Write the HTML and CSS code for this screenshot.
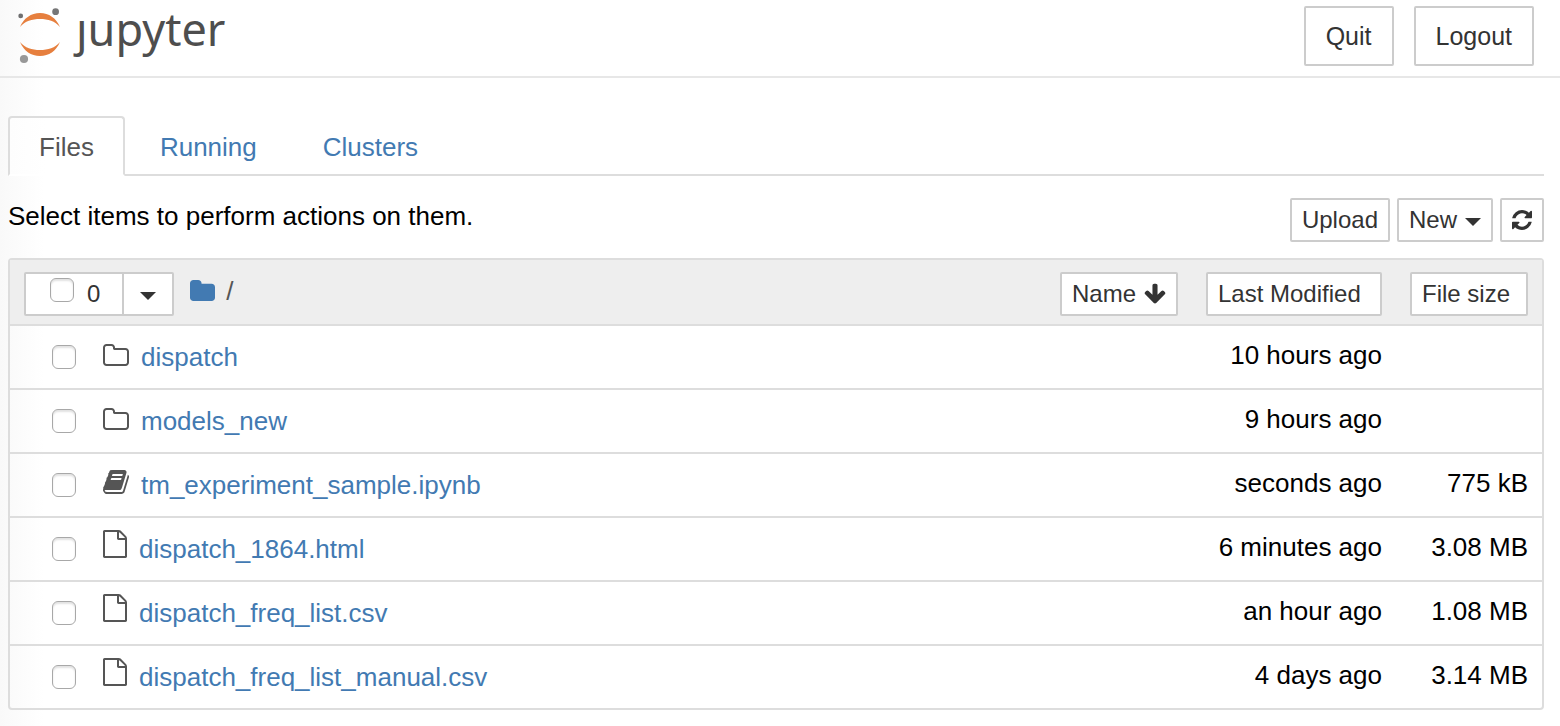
FILE: index.html
```html
<!DOCTYPE html>
<html lang="en">
<head>
<meta charset="utf-8">
<title>Home</title>
<link rel="stylesheet" href="styles.css">
</head>
<body>
<svg class="sprite" aria-hidden="true">
  <symbol id="i-refresh" viewBox="128 0 1536 1792"><path d="M1639 1056q0 5-1 7-64 268-268 434.500t-478 166.500q-146 0-282.500-55t-243.500-157l-129 129q-19 19-45 19t-45-19-19-45v-448q0-26 19-45t45-19h448q26 0 45 19t19 45-19 45l-137 137q71 66 161 102t187 36q134 0 250-65t186-179q11-17 53-117 8-23 30-23h192q13 0 22.500 9.500t9.500 22.500zm25-800v448q0 26-19 45t-45 19h-448q-26 0-45-19t-19-45 19-45l138-138q-148-137-349-137-134 0-250 65t-186 179q-11 17-53 117-8 23-30 23h-199q-13 0-22.500-9.500t-9.500-22.500v-7q65-268 270-434.500t480-166.500q146 0 284 55.500t245 156.500l130-129q19-19 45-19t45 19 19 45z"/></symbol>
  <symbol id="i-down" viewBox="64 0 1664 1792"><path d="M1675 832q0 53-37 90l-651 652q-39 37-91 37-53 0-90-37l-651-652q-38-36-38-90 0-53 38-91l74-75q39-37 91-37 53 0 90 37l294 294v-704q0-52 38-90t90-38h128q52 0 90 38t38 90v704l294-294q37-37 90-37 52 0 91 37l75 75q37 39 37 91z"/></symbol>
  <symbol id="i-folder" viewBox="64 0 1664 1792"><path d="M1728 608v704q0 92-66 158t-158 66h-1216q-92 0-158-66t-66-158v-960q0-92 66-158t158-66h320q92 0 158 66t66 158v32h672q92 0 158 66t66 158z"/></symbol>
  <symbol id="i-folder-o" viewBox="64 0 1664 1792"><path d="M1600 1312v-704q0-40-28-68t-68-28h-704q-40 0-68-28t-28-68v-64q0-40-28-68t-68-28h-320q-40 0-68 28t-28 68v960q0 40 28 68t68 28h1216q40 0 68-28t28-68zm128-704v704q0 92-66 158t-158 66h-1216q-92 0-158-66t-66-158v-960q0-92 66-158t158-66h320q92 0 158 66t66 158v32h672q92 0 158 66t66 158z"/></symbol>
  <symbol id="i-book" viewBox="64 0 1664 1792"><path d="M1703 478q40 57 18 129l-275 906q-19 64-76.500 107.500t-122.500 43.500h-923q-77 0-148.500-53.500t-99.500-131.500q-24-67-2-127 0-4 3-27t4-37q1-8-3-21.500t-3-19.500q2-11 8-21t16.500-23.500 16.500-23.500q23-38 45-91.500t30-91.500q3-10 .5-30t-.5-28q3-11 17-28t17-23q21-36 42-92t25-90q1-9-2.500-32t.5-28q4-13 22-30.500t22-22.500q19-26 42.500-84.500t27.500-96.500q1-8-3-25.500t-2-26.500q2-8 9-18t18-23 17-21q8-12 16.500-30.500t15-35 16-36 19.500-32 26.500-23.500 36-11.500 47.500 5.500l-1 3q38-9 51-9h761q74 0 114 56t18 130l-274 906q-36 119-71.500 153.500t-128.500 34.500h-869q-27 0-38 15-11 16-1 43 24 70 144 70h923q29 0 56-15.500t35-41.500l300-987q7-22 5-57 38 15 59 43zm-1064 2q-4 13 2 22.500t20 9.500h608q13 0 25.500-9.500t16.500-22.500l21-64q4-13-2-22.500t-20-9.500h-608q-13 0-25.500 9.500t-16.500 22.500zm-83 256q-4 13 2 22.500t20 9.500h608q13 0 25.500-9.500t16.500-22.500l21-64q4-13-2-22.500t-20-9.500h-608q-13 0-25.500 9.500t-16.500 22.500z"/></symbol>
  <symbol id="i-file" viewBox="128 0 1536 1792"><path d="M1596 380q28 28 48 76t20 88v1152q0 40-28 68t-68 28h-1344q-40 0-68-28t-28-68v-1600q0-40 28-68t68-28h896q40 0 88 20t76 48zm-444-244v376h376q-10-29-22-41l-313-313q-12-12-41-22zm384 1528v-1024h-416q-40 0-68-28t-28-68v-416h-768v1536h1280z"/></symbol>
</svg>

<header class="topbar">
  <a class="brand" href="#" aria-label="jupyter">
    <svg class="brand-mark" viewBox="18 6 46 60" aria-hidden="true">
      <path fill="#e67f3e" d="M20 27C24 18 31 13 40 13S56 18 60 27C55 21 48 19 40 19S25 21 20 27z"/>
      <path fill="#e67f3e" d="M20 42C24 51 31 56 40 56S56 51 60 42C55 48 48 50 40 50S25 48 20 42z"/>
      <circle fill="#6f6f70" cx="20.700" cy="15.900" r="2.400"/>
      <circle fill="#767677" cx="55.600" cy="11.700" r="3.400"/>
      <circle fill="#989898" cx="24" cy="59" r="4.100"/>
    </svg>
    <span class="brand-name">&#567;upyter</span>
  </a>
  <div class="session">
    <button class="btn btn-large" type="button">Quit</button>
    <button class="btn btn-large" type="button">Logout</button>
  </div>
</header>

<main class="page">
  <nav class="tabs">
    <a class="tab tab-active" href="#files" aria-current="page">Files</a>
    <a class="tab" href="#running">Running</a>
    <a class="tab" href="#clusters">Clusters</a>
  </nav>

  <div class="toolbar">
    <p class="hint">Select items to perform actions on them.</p>
    <div class="actions">
      <button class="btn" type="button">Upload</button>
      <button class="btn" type="button">New <span class="caret"></span></button>
      <button class="btn" type="button" aria-label="Refresh"><svg class="icon icon-refresh"><use href="#i-refresh"/></svg></button>
    </div>
  </div>

  <table class="files" id="files">
    <thead>
      <tr>
        <th class="col-name">
          <div class="head">
            <div class="select-group">
              <label class="select-all"><input class="check" type="checkbox"><span>0</span></label>
              <button class="select-menu" type="button" aria-label="Select by type"><span class="caret"></span></button>
            </div>
            <div class="crumbs">
              <a class="crumb" href="#" aria-label="Home folder"><svg class="icon icon-home"><use href="#i-folder"/></svg></a>
              <span>/</span>
            </div>
            <button class="btn sort" type="button">Name <svg class="icon icon-sort"><use href="#i-down"/></svg></button>
          </div>
        </th>
        <th class="col-date"><button class="btn sort sort-fill" type="button">Last Modified</button></th>
        <th class="col-size"><button class="btn sort sort-fill" type="button">File size</button></th>
      </tr>
    </thead>
    <tbody>
      <tr>
        <td class="col-name"><div class="item"><input class="check" type="checkbox" aria-label="dispatch"><svg class="icon icon-wide"><use href="#i-folder-o"/></svg><a href="#">dispatch</a></div></td>
        <td class="col-date">10 hours ago</td><td class="col-size"></td>
      </tr>
      <tr>
        <td class="col-name"><div class="item"><input class="check" type="checkbox" aria-label="models_new"><svg class="icon icon-wide"><use href="#i-folder-o"/></svg><a href="#">models_new</a></div></td>
        <td class="col-date">9 hours ago</td><td class="col-size"></td>
      </tr>
      <tr>
        <td class="col-name"><div class="item"><input class="check" type="checkbox" aria-label="tm_experiment_sample.ipynb"><svg class="icon icon-wide icon-book"><use href="#i-book"/></svg><a href="#">tm_experiment_sample.ipynb</a></div></td>
        <td class="col-date">seconds ago</td><td class="col-size">775 kB</td>
      </tr>
      <tr>
        <td class="col-name"><div class="item"><input class="check" type="checkbox" aria-label="dispatch_1864.html"><svg class="icon icon-file"><use href="#i-file"/></svg><a href="#">dispatch_1864.html</a></div></td>
        <td class="col-date">6 minutes ago</td><td class="col-size">3.08 MB</td>
      </tr>
      <tr>
        <td class="col-name"><div class="item"><input class="check" type="checkbox" aria-label="dispatch_freq_list.csv"><svg class="icon icon-file"><use href="#i-file"/></svg><a href="#">dispatch_freq_list.csv</a></div></td>
        <td class="col-date">an hour ago</td><td class="col-size">1.08 MB</td>
      </tr>
      <tr>
        <td class="col-name"><div class="item"><input class="check" type="checkbox" aria-label="dispatch_freq_list_manual.csv"><svg class="icon icon-file"><use href="#i-file"/></svg><a href="#">dispatch_freq_list_manual.csv</a></div></td>
        <td class="col-date">4 days ago</td><td class="col-size">3.14 MB</td>
      </tr>
    </tbody>
  </table>
</main>
</body>
</html>
```

FILE: styles.css
```css
* {
  box-sizing: border-box;
}

body {
  margin: 0;
  background: #fff linear-gradient(to right, #f9f9f9, #fff 44px);
  color: #000;
  font-family: "Liberation Sans", Arial, sans-serif;
  font-size: 26px;
  line-height: 36px;
}

a {
  color: #427ab2;
  text-decoration: none;
}

.sprite {
  position: absolute;
  width: 0;
  height: 0;
}

.icon {
  display: block;
  flex: none;
  fill: currentColor;
}

.topbar {
  display: flex;
  justify-content: space-between;
  align-items: flex-start;
  padding: 6px 26px 10px 18px;
  border-bottom: 2px solid #e7e7e7;
}

.brand {
  display: flex;
  gap: 12px;
  height: 60px;
  color: #4e4e4e;
}

.brand-mark {
  width: 46px;
  height: 60px;
}

.brand-name {
  font-family: "Noto Sans", "Open Sans", sans-serif;
  font-size: 45px;
  line-height: 46px;
}

.session {
  display: flex;
  gap: 20px;
}

.btn {
  display: flex;
  align-items: center;
  justify-content: center;
  gap: 8px;
  height: 44px;
  padding: 0 10px;
  border: 2px solid #ccc;
  border-radius: 2px;
  background: #fff;
  color: #333;
  font: inherit;
  font-size: 24px;
  white-space: nowrap;
}

.btn-large {
  height: 60px;
  padding: 0 20px;
  font-size: 25px;
}

.caret {
  margin-top: 4px;
  border: 8px solid transparent;
  border-top-color: #333;
  border-bottom: 0;
}

.page {
  padding: 38px 16px 16px 8px;
}

.tabs {
  display: flex;
  gap: 4px;
  border-bottom: 2px solid #ddd;
}

.tab {
  margin-bottom: -2px;
  padding: 11px 29px 9px;
  border: 2px solid transparent;
  border-bottom-color: #ddd;
  border-radius: 4px 4px 0 0;
}

.tab-active {
  border-color: #ddd;
  border-bottom-color: #fff;
  background: linear-gradient(to right, #fdfdfd, #fff 36px);
  color: #555;
}

.toolbar {
  display: flex;
  justify-content: space-between;
  align-items: flex-start;
  padding: 22px 0 16px;
}

.hint {
  margin: 0;
}

.actions {
  display: flex;
  gap: 7px;
}

.icon-refresh {
  width: 20px;
  height: 24px;
}

.files {
  width: 100%;
  border: 2px solid #ddd;
  border-radius: 4px;
  border-spacing: 0;
}

.files th {
  padding: 12px 0 8px;
  background: #eee;
  font-weight: normal;
}

.files td {
  height: 64px;
  padding: 0 0 4px;
  border-top: 2px solid #ddd;
}

.files .col-date {
  width: 204px;
  padding-left: 28px;
  text-align: right;
}

.files .col-size {
  width: 160px;
  padding-left: 28px;
  padding-right: 14px;
  text-align: right;
}

.files td.col-name {
  padding: 0 0 0 42px;
}

.head {
  display: flex;
  align-items: center;
  padding-left: 14px;
}

.select-group {
  display: flex;
  height: 44px;
  border: 2px solid #ccc;
  border-radius: 2px;
  background: #fff;
}

.select-all {
  display: flex;
  align-items: center;
  gap: 13px;
  padding: 0 22px 0 24px;
  color: #333;
  font-size: 24px;
}

.select-all .check {
  margin-bottom: 8px;
}

.select-menu {
  display: flex;
  align-items: center;
  padding: 0 16px;
  border: 0;
  border-left: 2px solid #ccc;
  background: #fff;
}

.check {
  appearance: none;
  flex: none;
  width: 24px;
  height: 24px;
  margin: 0;
  border: 1px solid #a8a8a8;
  border-radius: 6px;
  background: #fff;
  box-shadow: inset 0 2px 2px #e2e2e2;
}

.crumbs {
  display: flex;
  align-items: center;
  gap: 11px;
  padding: 0 16px 6px;
  color: #555;
}

.icon-home {
  width: 25px;
  height: 27px;
}

.sort {
  margin-left: auto;
}

.sort-fill {
  width: 100%;
  justify-content: flex-start;
}

.icon-sort {
  width: 22px;
  height: 24px;
}

.item {
  display: flex;
  align-items: center;
  color: #555;
}

.item .check {
  margin-right: 27px;
}

.item .icon {
  margin-right: 12px;
  margin-bottom: 2px;
}

.icon-wide {
  width: 26px;
  height: 28px;
}

.item .icon-book {
  margin-bottom: 6px;
}

.icon-file {
  width: 24px;
  height: 28px;
}

.item .icon-file {
  margin-bottom: 10px;
}
```
